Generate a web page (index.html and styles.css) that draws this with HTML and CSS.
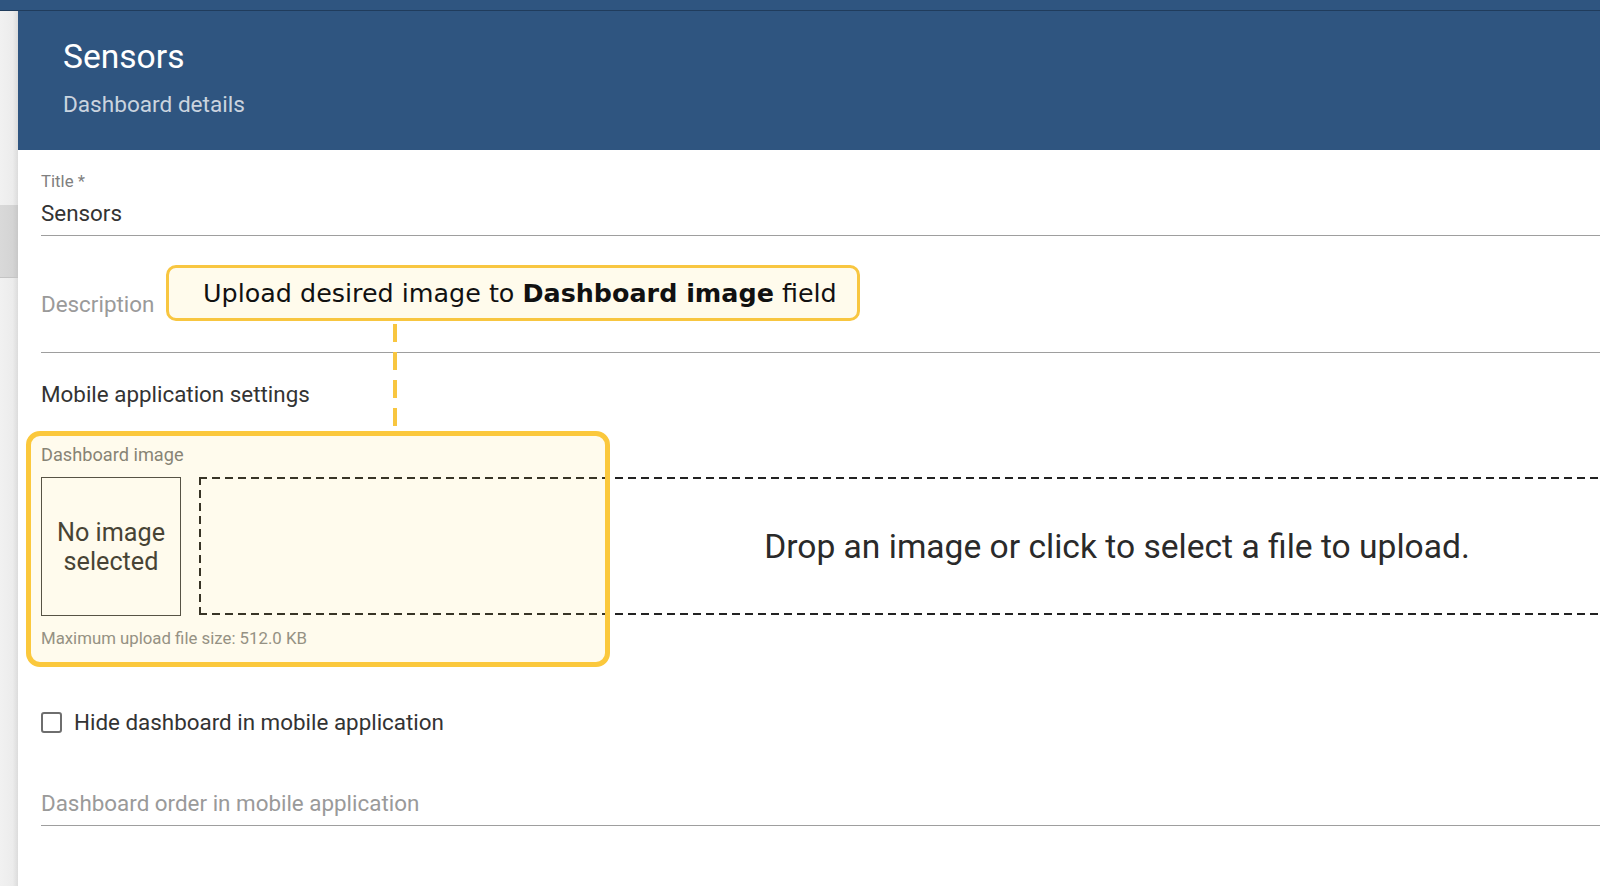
FILE: index.html
```html
<!DOCTYPE html>
<html lang="en">
<head>
    <meta charset="UTF-8">
    <meta name="viewport" content="width=device-width, initial-scale=1.0">
    <title>Sensors - Dashboard details</title>
    <link rel="stylesheet" href="styles.css">
</head>
<body>
    <div class="toolbar"></div>
    <div class="shell">
        <aside class="sidebar">
            <div class="nav-item"></div>
            <div class="nav-item active"></div>
        </aside>

        <main class="page">
            <header class="page-header">
                <h1>Sensors</h1>
                <p>Dashboard details</p>
            </header>

            <form class="details">
                <div class="field">
                    <label for="title">Title *</label>
                    <input type="text" id="title" value="Sensors">
                </div>

                <div class="field field-description">
                    <span class="placeholder">Description</span>
                </div>

                <h3 class="section-title">Mobile application settings</h3>

                <div class="image-field">
                    <div class="field-label">Dashboard image</div>
                    <div class="image-row">
                        <div class="preview">No image<br>selected</div>
                        <div class="dropzone">Drop an image or click to select a file to upload.</div>
                    </div>
                    <div class="hint">Maximum upload file size: 512.0 KB</div>
                </div>

                <label class="checkbox-row">
                    <span class="box"></span>
                    <span>Hide dashboard in mobile application</span>
                </label>

                <div class="field field-order">
                    <span class="placeholder">Dashboard order in mobile application</span>
                </div>
            </form>
        </main>
    </div>

    <!-- help callout drawn over the form -->
    <div class="callout"><span>Upload desired image to <b>Dashboard image</b> field</span></div>
    <div class="connector"></div>
    <div class="highlight"></div>
</body>
</html>
```

FILE: styles.css
```css
body {
    margin: 0;
    position: relative;
    height: 886px;
    overflow: hidden;
    font-family: Roboto, "Noto Sans", Arial, sans-serif;
    background-color: #fff;
    color: #333;
}

.toolbar {
    height: 10px;
    background-color: #2f5580;
    border-bottom: 1px solid #203c5c;
}

.shell {
    display: flex;
    height: 875px;
}

.sidebar {
    flex: none;
    width: 18px;
    background: linear-gradient(to right, #f1f1f1 0%, #ececec 70%, #dcdcdc 100%);
    padding-top: 194px;
}

.nav-item.active {
    height: 72px;
    background: linear-gradient(to right, #d9d9d9 0%, #d4d4d4 70%, #c8c8c8 100%);
    border-bottom: 1px solid #c4c4c4;
}

.page {
    flex: 1;
    min-width: 0;
    overflow: hidden;
}

.page-header {
    background-color: #2f5580;
    height: 139px;
    box-sizing: border-box;
    padding: 26px 0 0 45px;
    color: #fff;
}

.page-header h1 {
    margin: 0;
    font-size: 33.6px;
    line-height: 40px;
    font-weight: 400;
}

.page-header p {
    margin: 14px 0 0;
    font-size: 22.6px;
    line-height: 28px;
    color: rgba(255, 255, 255, 0.75);
}

.details {
    width: 1860px;
    padding: 21px 0 0 23px;
}

.field {
    border-bottom: 1px solid #9e9e9e;
}

.field label {
    display: block;
    font-size: 16.8px;
    line-height: 20px;
    color: #808080;
}

.field input {
    display: block;
    width: 100%;
    box-sizing: border-box;
    margin-top: 8px;
    padding: 0 0 8px;
    border: none;
    outline: none;
    background: transparent;
    font-family: inherit;
    font-size: 22.4px;
    line-height: 28px;
    height: 36px;
    color: #333;
}

.placeholder {
    display: block;
    font-size: 22.4px;
    line-height: 28px;
    color: #9a9a9a;
}

.field-description {
    margin-top: 54px;
    padding-bottom: 34px;
}

.section-title {
    margin: 27px 0 0;
    font-size: 22.4px;
    line-height: 28px;
    font-weight: 400;
    color: #333;
}

.image-field {
    margin-top: 36px;
}

.field-label {
    font-size: 18.2px;
    line-height: 22px;
    color: #7a7a7a;
}

.image-row {
    display: flex;
    gap: 18px;
    margin-top: 11px;
}

.preview {
    flex: none;
    width: 140px;
    height: 139px;
    box-sizing: border-box;
    border: 1px solid #444;
    display: flex;
    align-items: center;
    justify-content: center;
    text-align: center;
    font-size: 25.2px;
    line-height: 29px;
    color: #333;
}

/* dashed frame drawn with gradients so the dashes come out longer than the default */
.dropzone {
    flex: none;
    width: 1836px;
    height: 138px;
    box-sizing: border-box;
    display: flex;
    align-items: center;
    justify-content: center;
    font-size: 33.6px;
    color: #2a2a2a;
    background-image:
        repeating-linear-gradient(to right, #222 0 8px, transparent 8px 13px),
        repeating-linear-gradient(to right, #222 0 8px, transparent 8px 13px),
        repeating-linear-gradient(to bottom, #222 0 8px, transparent 8px 13px);
    background-size: 100% 2px, 100% 2px, 2px 100%;
    background-position: 0 0, 0 100%, 0 0;
    background-repeat: no-repeat;
}

.hint {
    margin-top: 12px;
    font-size: 16.8px;
    line-height: 20px;
    color: #8a8a8a;
}

.checkbox-row {
    display: flex;
    align-items: center;
    gap: 12px;
    margin-top: 60px;
    font-size: 22.4px;
    line-height: 28px;
    color: #333;
}

.checkbox-row .box {
    width: 21px;
    height: 21px;
    box-sizing: border-box;
    border: 2px solid #6e6e6e;
    border-radius: 3px;
}

.field-order {
    margin-top: 53px;
    padding-bottom: 8px;
}

.callout {
    position: absolute;
    left: 166px;
    top: 265px;
    width: 694px;
    height: 56px;
    box-sizing: border-box;
    padding-left: 34px;
    display: flex;
    align-items: center;
    background-color: #fffbec;
    border: 3px solid #f8c640;
    border-radius: 10px;
    font-family: "DejaVu Sans", Verdana, sans-serif;
    font-size: 25.4px;
    color: #111;
    white-space: nowrap;
}

.connector {
    position: absolute;
    left: 393px;
    top: 324px;
    width: 4px;
    height: 108px;
    background: repeating-linear-gradient(to bottom, #f8c640 0 18px, transparent 18px 28px);
}

.highlight {
    position: absolute;
    left: 26px;
    top: 431px;
    width: 584px;
    height: 236px;
    box-sizing: border-box;
    border: 5px solid #fbc83c;
    border-radius: 14px;
    background-color: rgba(255, 214, 80, 0.1);
    pointer-events: none;
}
```
